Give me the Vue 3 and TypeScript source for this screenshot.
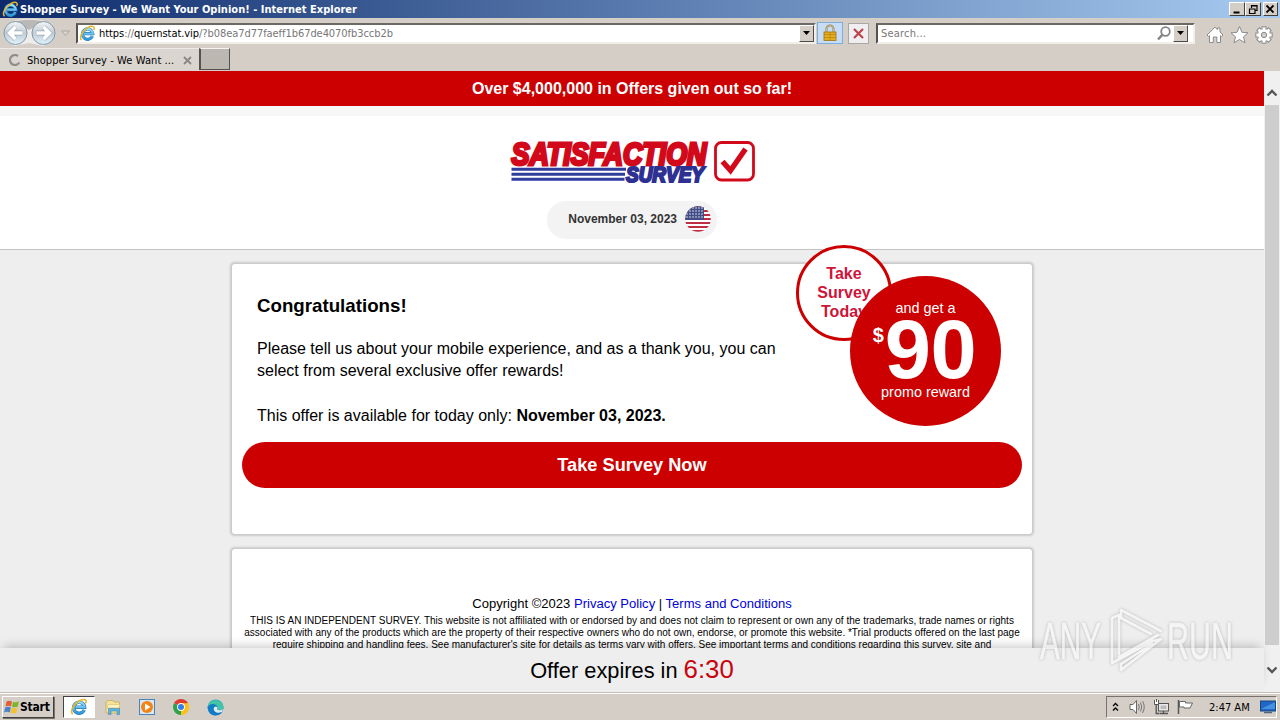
<script setup lang="ts">
const date = 'November 03, 2023'
const finePrint = [
  'THIS IS AN INDEPENDENT SURVEY. This website is not affiliated with or endorsed by and does not claim to represent or own any of the trademarks, trade names or rights',
  'associated with any of the products which are the property of their respective owners who do not own, endorse, or promote this website. *Trial products offered on the last page',
  "require shipping and handling fees. See manufacturer's site for details as terms vary with offers. See important terms and conditions regarding this survey, site and",
]
const stripes = [0, 1, 2, 3, 4, 5, 6]
const starRows = [2, 5, 8, 11]
const starCols = [2, 5, 8, 11, 14, 17]
const gearTeeth = [0, 45, 90, 135, 180, 225, 270, 315]
</script>

<template>
  <div class="desktop">
    <svg class="defs" width="0" height="0" aria-hidden="true">
      <defs>
        <linearGradient id="ieBlue" x1="0" y1="0" x2="0" y2="1">
          <stop offset="0" stop-color="#9be0fa" />
          <stop offset="1" stop-color="#2f97da" />
        </linearGradient>
        <linearGradient id="navFill" x1="0" y1="0" x2="0" y2="1">
          <stop offset="0" stop-color="#f4f6f8" />
          <stop offset=".5" stop-color="#c3ccd5" />
          <stop offset="1" stop-color="#dff3fb" />
        </linearGradient>
        <linearGradient id="edgeFill" x1="0" y1="0" x2="1" y2="1">
          <stop offset="0" stop-color="#35c1d0" />
          <stop offset="1" stop-color="#0b5cb8" />
        </linearGradient>
        <symbol id="ie" viewBox="0 0 18 18">
          <path d="M14.200 11.800A5.500 5.500 0 1 1 14.600 9.200H5.500" fill="none" stroke="#2680bd" stroke-width="3.400" />
          <path d="M14.200 11.800A5.500 5.500 0 1 1 14.600 9.200H5.500" fill="none" stroke="url(#ieBlue)" stroke-width="2.200" />
          <path d="M2.700 16C-.5 13.500 4 5.500 9.500 2.700C14.500 .3 17.500 1.500 15.500 5.300" fill="none" stroke="#e5b52c" stroke-width="1.600" />
        </symbol>
      </defs>
    </svg>

    <header class="titlebar">
      <svg class="title-icon" width="17" height="17"><use href="#ie" /></svg>
      <span class="title-text">Shopper Survey - We Want Your Opinion! - Internet Explorer</span>
      <div class="window-buttons">
        <button class="wb"><svg width="13" height="11"><path d="M2.500 8.500h6" stroke="#000" stroke-width="2" /></svg></button>
        <button class="wb"><svg width="13" height="11"><path d="M4.500 4V1.500h5.500v5H8M4 2h6.500M2 5h6.500M2.500 4.500V9.500h5.500V4.500" fill="none" stroke="#000" stroke-width="1.200" /></svg></button>
        <button class="wb close"><svg width="13" height="11"><path d="M2.500 1.500l7 7M9.500 1.500l-7 7" stroke="#000" stroke-width="1.800" /></svg></button>
      </div>
    </header>

    <div class="toolbar">
      <svg class="nav" width="74" height="30" viewBox="0 0 74 30">
        <path d="M15 2.500C24 0 34 0 43 2.500A13 13 0 0 1 43 28L29 25L15 28A13 13 0 0 1 15 2.500Z" fill="#f3f2f1" opacity=".85" />
        <path d="M14 3.500C24 1 34 1 44 3.500L29 12Z" fill="#bbb9b6" />
        <g fill="url(#navFill)" stroke="#8299aa">
          <circle cx="15.500" cy="15" r="11.500" />
          <circle cx="43.500" cy="15" r="11.500" />
        </g>
        <g fill="none" stroke="#94a8b7" stroke-width="4.800">
          <path d="M22.500 15H10M15.500 9L9.500 15L15.500 21" />
          <path d="M36.500 15H49M43.500 9L49.500 15L43.500 21" />
        </g>
        <g fill="none" stroke="#fff" stroke-width="3.600">
          <path d="M22.500 15H10M15.500 9L9.500 15L15.500 21" />
          <path d="M36.500 15H49M43.500 9L49.500 15L43.500 21" />
        </g>
        <path d="M61.500 13h8l-4 4.500z" fill="#d9d5cf" stroke="#aaa6a0" />
      </svg>
      <div class="field address">
        <svg width="17" height="17"><use href="#ie" /></svg>
        <span class="url"><span class="host">https<i>://</i>quernstat.vip</span><span class="path">/?b08ea7d77faeff1b67de4070fb3ccb2b</span></span>
        <button class="drop"><svg width="9" height="5"><path d="M1 0h7L4.500 4z" /></svg></button>
      </div>
      <div class="lock">
        <svg width="16" height="18" viewBox="0 0 16 18">
          <path d="M4.500 9V5a3.500 3.500 0 0 1 7 0V9" fill="none" stroke="#9b8250" stroke-width="2" />
          <path d="M4.500 9V5a3.500 3.500 0 0 1 7 0V9" fill="none" stroke="#dfd0a0" stroke-width=".7" />
          <rect x="2" y="8" width="12" height="8.500" fill="#e5ac1d" stroke="#9d7015" stroke-width=".8" />
          <path d="M2 10.500h12M2 13.500h12M8 8v8" stroke="#b88112" stroke-width=".7" />
        </svg>
      </div>
      <div class="stop"><svg width="13" height="13"><path d="M2 2l9 9M11 2l-9 9" stroke="#b9454a" stroke-width="2.200" /></svg></div>
      <div class="field search">
        <span class="placeholder">Search...</span>
        <svg class="glass" width="15" height="15"><circle cx="8.500" cy="5.500" r="4.300" fill="none" stroke="#858585" stroke-width="1.800" /><path d="M5.500 8.700L1 13.500" stroke="#858585" stroke-width="2.500" /></svg>
        <button class="drop"><svg width="9" height="5"><path d="M1 0h7L4.500 4z" /></svg></button>
      </div>
      <svg class="tools" width="68" height="20" viewBox="0 0 68 20">
        <g fill="#fff" stroke="#8b8b8b" stroke-width="1">
          <path d="M1 10L9 2.200L11.500 4.600V3H14V7L17 10L15.500 11.500L14.500 10.700V17.500H10.800V12H7.300V17.500H3.500V10.700L2.500 11.500Z" />
          <path d="M33.500 1.500L36 7.300L42 7.800L37.500 11.800L39 17.800L33.500 14.500L28 17.800L29.500 11.800L25 7.800L31 7.300Z" />
          <rect v-for="t in gearTeeth" :key="t" x="56" y="1.800" width="4" height="4" :transform="`rotate(${t} 58 10)`" />
          <circle cx="58" cy="10" r="6" stroke="none" />
          <circle cx="58" cy="10" r="2.700" fill="#d5cec7" />
        </g>
      </svg>
    </div>

    <nav class="tabs">
      <div class="tab">
        <svg width="12" height="12"><path d="M10.300 8.500A5 5 0 1 1 9 2" fill="none" stroke="#8d8d8d" stroke-width="2.200" /></svg>
        <span class="tab-text">Shopper Survey - We Want ...</span>
        <svg class="tab-close" width="9" height="9"><path d="M1 1l7 7M8 1l-7 7" stroke="#8b8784" stroke-width="1.800" /></svg>
      </div>
      <div class="new-tab"></div>
    </nav>

    <div class="viewport">
      <main class="page">
        <div class="banner">Over $4,000,000 in Offers given out so far!</div>
        <section class="masthead">
          <svg class="logo" width="248" height="46" viewBox="0 0 248 46">
            <g font-family="'Liberation Sans', Arial, sans-serif" font-weight="bold" font-style="italic" stroke-linejoin="miter">
              <text x="2.500" y="26.500" font-size="31" textLength="195" lengthAdjust="spacingAndGlyphs" fill="#d2091b" stroke="#d2091b" stroke-width="3.100">SATISFACTION</text>
              <text x="117" y="43.500" font-size="21.500" textLength="78" lengthAdjust="spacingAndGlyphs" fill="#2e3192" stroke="#2e3192" stroke-width="2.200">SURVEY</text>
            </g>
            <path d="M2.500 31.200H117M2.500 36.200H116M2.500 41.200H115.500" stroke="#2f3d9c" stroke-width="2.900" />
            <rect x="206.500" y="4.500" width="38" height="37.500" rx="6" fill="#fff" stroke="#d2091b" stroke-width="2.800" />
            <path d="M213.500 23.500L221.500 32.500L236.500 11" fill="none" stroke="#d2091b" stroke-width="5.400" />
          </svg>
          <div class="date-pill">
            <span>{{ date }}</span>
            <svg width="26" height="26" viewBox="0 0 26 26">
              <defs><clipPath id="disc"><circle cx="13" cy="13" r="12.800" /></clipPath></defs>
              <g clip-path="url(#disc)">
                <rect width="26" height="26" fill="#fff" />
                <rect v-for="s in stripes" :key="s" x="0" :y="s * 4" width="26" height="2" fill="#bd3044" />
                <rect width="19" height="14" fill="#424d86" />
                <template v-for="r in starRows" :key="r">
                  <circle v-for="c in starCols" :key="c" :cx="c" :cy="r" r=".8" fill="#dfe3f1" />
                </template>
              </g>
            </svg>
          </div>
        </section>

        <section class="card offer">
          <h3>Congratulations!</h3>
          <p>Please tell us about your mobile experience, and as a thank you, you can<br />select from several exclusive offer rewards!</p>
          <p>This offer is available for today only: <b>{{ date }}.</b></p>
          <button class="cta">Take Survey Now</button>
          <div class="badge-today">Take<br />Survey<br />Today</div>
          <div class="badge-reward">
            <span class="small">and get a</span>
            <div class="amount"><sup>$</sup><strong>90</strong></div>
            <span class="small">promo reward</span>
          </div>
        </section>

        <section class="card legal">
          <div class="copyright">Copyright ©2023 <a>Privacy Policy</a> | <a>Terms and Conditions</a></div>
          <div class="fine"><div v-for="line in finePrint" :key="line">{{ line }}</div></div>
        </section>
      </main>

      <aside class="scrollbar">
        <svg class="up" width="12" height="9"><path d="M1.500 7.500L6 3L10.500 7.500" fill="none" stroke="#555" stroke-width="2.300" /></svg>
        <div class="thumb"></div>
        <svg class="down" width="12" height="9"><path d="M1.500 1.500L6 6L10.500 1.500" fill="none" stroke="#555" stroke-width="2.300" /></svg>
      </aside>

      <div class="expiry"><span>Offer expires in <em>6:30</em></span></div>

      <svg class="watermark" width="204" height="72" viewBox="0 0 204 72">
        <g font-family="'Liberation Sans', Arial, sans-serif" font-size="52" fill="#fafafa" stroke="#fafafa" stroke-width=".6">
          <text x="5" y="54" textLength="61" lengthAdjust="spacingAndGlyphs">ANY</text>
          <text x="132" y="54" textLength="66" lengthAdjust="spacingAndGlyphs">RUN</text>
        </g>
        <path d="M77 57V13L84 10V49M84 52L123 30M86 5V13L116 29M86 5L126 26M77 58L118 36L126 34L86 65V59L117 39" fill="none" stroke="#fafafa" stroke-width="2.600" stroke-linejoin="round" stroke-linecap="round" />
      </svg>
    </div>

    <footer class="taskbar">
      <button class="start">
        <svg width="16" height="16" viewBox="0 0 16 16">
          <path d="M2.500 2.500Q5 1 8 2.500L7 7.500Q4 6 1.500 7.500Z" fill="#df6034" />
          <path d="M9 2.700Q12 4 15 2.300L13.800 7.500Q11 9 8 7.700Z" fill="#7bb62d" />
          <path d="M1.200 8.500Q4 7 6.800 8.500L5.800 13.500Q3 12 0 13.500Z" fill="#4b82c8" />
          <path d="M7.800 8.700Q10.500 10 13.500 8.500L12.300 13.700Q9.500 15.300 6.700 13.800Z" fill="#f4c32c" />
        </svg>
        <b>Start</b>
      </button>
      <div class="launchers">
        <div class="slot active"><svg width="18" height="18"><use href="#ie" /></svg></div>
        <div class="slot">
          <svg width="17" height="17" viewBox="0 0 17 17">
            <path d="M1 14V3L3 1.500H8L9 3H14.500V14Z" fill="#f6e39b" stroke="#c9ab55" stroke-width=".8" />
            <path d="M3 5.500H15L14 9H2Z" fill="#fbf3c8" stroke="#d9bd65" stroke-width=".6" />
            <path d="M3.500 15.500V9.500H14.500V15.500H12V12H6V15.500Z" fill="#5fb5df" stroke="#3a88b5" stroke-width=".6" />
          </svg>
        </div>
        <div class="slot">
          <svg width="16" height="16" viewBox="0 0 16 16">
            <rect x=".5" y=".5" width="15" height="15" fill="#d7e7f3" stroke="#4b85b8" />
            <circle cx="8" cy="8" r="6" fill="#f18414" /><path d="M6 4.500L11.500 8L6 11.500Z" fill="#fff" />
          </svg>
        </div>
        <div class="slot">
          <svg width="16" height="16" viewBox="0 0 16 16">
            <path d="M8 8L1.100 4A8 8 0 0 1 14.900 4Z" fill="#e03c2e" />
            <path d="M8 8L14.900 4A8 8 0 0 1 8 16Z" fill="#fbc116" />
            <path d="M8 8V16A8 8 0 0 1 1.100 4Z" fill="#2da14b" />
            <path d="M8 4.200H15A8 8 0 0 1 8 16L11.300 10Z" fill="#fbc116" />
            <circle cx="8" cy="8" r="3.900" fill="#fff" /><circle cx="8" cy="8" r="3" fill="#387de5" />
          </svg>
        </div>
        <div class="slot">
          <svg width="17" height="17" viewBox="0 0 17 17">
            <circle cx="8.500" cy="8.500" r="8" fill="url(#edgeFill)" />
            <path d="M1 6.500C3-.5 15-1 16.500 7.500C17 11 12 12 10 10.500C12 8 9 5 6 5.500C4 5.500 2 6 .5 8Z" fill="#43c5a5" />
            <path d="M10 10.500C12 12 15 11 16.500 10L15 13C11 15 6 13 6.500 9C7 7 9 7 10.500 8Z" fill="#d9ecf4" />
            <path d="M.6 8C3 4 9 4 10.500 8C7 6 5 10 8 13C10 15 13 14.500 15 13C11 18 2 18 .6 8Z" fill="#147bc6" />
          </svg>
        </div>
      </div>
      <div class="tray">
        <svg class="chev" width="7" height="10"><path d="M1 4L3.500 1.500L6 4M1 8.500L3.500 6L6 8.500" fill="none" stroke="#000" stroke-width="1.300" /></svg>
        <svg class="vol" width="17" height="16" viewBox="0 0 17 16"><path d="M1 5.500H4L7.500 1.500V14.500L4 10.500H1Z" fill="#fff" stroke="#666" /><path d="M9.500 5Q11 8 9.500 11M11.500 3.500Q14 8 11.500 12.500M13.500 2Q17 8 13.500 14" fill="none" stroke="#777" /></svg>
        <svg class="net" width="17" height="16" viewBox="0 0 17 16"><rect x="5.500" y="4.500" width="10" height="7.500" fill="#e8e8e8" stroke="#555" /><rect x="7.500" y="6.500" width="6" height="3.500" fill="#bbb" /><path d="M10.500 12V14.500M6.500 14.500H15M3.200 5V14.500H6" fill="none" stroke="#555" stroke-width="1.300" /><path d="M1.500 1V5.500H5.500V1M3.500 0V3" fill="#fff" stroke="#555" /></svg>
        <svg class="flag" width="17" height="16" viewBox="0 0 17 16"><path d="M1.500 1V15" stroke="#555" stroke-width="1.500" /><path d="M2.500 2.500H8.500V4H15.500L13 9H7V8H2.500Z" fill="#fff" stroke="#666" /></svg>
        <span class="clock">2:47 AM</span>
        <svg class="screen" width="16" height="14" viewBox="0 0 16 14"><rect x=".5" y="1" width="15" height="10" fill="#1f66c5" stroke="#16467f" /><path d="M1 9L15 2V9Z" fill="#4491e0" /><path d="M4 12.500H12" stroke="#50667e" stroke-width="1.500" /></svg>
      </div>
    </footer>
  </div>
</template>

<style>
body { margin: 0; overflow: hidden; }
</style>

<style scoped>
* { box-sizing: border-box; }
.desktop { width: 1280px; height: 720px; display: flex; flex-direction: column; overflow: hidden; background: #d5cec7; font-family: "DejaVu Sans Condensed", "DejaVu Sans", sans-serif; font-size: 11px; color: #000; }
.defs { position: absolute; }
svg { display: block; flex: none; }
button { padding: 0; border: 0; font: inherit; color: inherit; }

.titlebar { height: 18px; flex: none; display: flex; align-items: center; padding: 0 2px; background: linear-gradient(90deg, #0d2b6c, #a6caf0); }
.title-text { margin-left: 1px; width: 345px; white-space: nowrap; color: #fff; font-weight: bold; letter-spacing: .02px; }
.window-buttons { margin-left: auto; display: flex; }
.wb { width: 16px; height: 14px; background: #d5cec7; border: 1px solid; border-color: #fff #404040 #404040 #fff; display: flex; justify-content: center; align-items: center; }
.close { margin-left: 2px; width: 15px; }

.toolbar { height: 30px; flex: none; display: flex; align-items: center; }
.nav { margin-right: 2px; }
.field { height: 21px; display: flex; align-items: center; background: #fff; border: 2px solid; border-color: #6c6864 #f2efeb #f2efeb #55514e; }
.address { width: 740px; padding-left: 1px; }
.url { margin-left: 3px; white-space: nowrap; letter-spacing: -.06px; }
.url i { font-style: normal; color: #777; }
.path { color: #777; }
.drop { width: 15px; height: 17px; margin-left: auto; background: #d5cec7; border: 1px solid; border-color: #fff #504c49 #504c49 #fff; display: flex; align-items: center; justify-content: center; }
.lock { margin-left: 1px; width: 26px; height: 22px; border: 1px solid #7eaede; background: #c5ddf7; display: flex; align-items: center; justify-content: center; }
.stop { margin-left: 5px; width: 21px; height: 21px; border: 1px solid #aaa7a5; background: #f0eef0; display: flex; align-items: center; justify-content: center; }
.search { margin-left: 7px; width: 319px; padding-left: 3px; padding-right: 5px; }
.placeholder { color: #777; letter-spacing: .2px; }
.glass { margin-left: auto; }
.search .drop { margin-left: 1px; }
.tools { margin-left: 11px; margin-top: 4px; }

.tabs { height: 23px; flex: none; display: flex; }
.tab { width: 199px; display: flex; align-items: center; padding-left: 9px; background: #dbd5cf; border-top: 1px solid #eeeae5; }
.tab-text { margin-left: 6px; width: 156px; white-space: nowrap; letter-spacing: .08px; }
.new-tab { width: 31px; height: 22px; background: #bdb7b2; border: 1px solid; border-left-width: 2px; border-color: #f5f2ef #55514e #55514e #55514e; }

.viewport { position: relative; height: 621px; flex: none; display: flex; overflow: hidden; background: #eee; font-family: "Liberation Sans", Arial, sans-serif; }
.page { width: 1264px; font-size: 16px; }
.banner { height: 35px; background: #c00; color: #fff; font-weight: bold; text-align: center; line-height: 36px; }
.masthead { height: 144px; border-top: 10px solid #f7f7f7; background: #fff; display: flex; flex-direction: column; align-items: center; padding-top: 22px; box-shadow: inset 0 -1px #c3c3c3; }
.logo { margin-left: 2px; overflow: visible; }
.date-pill { margin-top: 17px; width: 170px; height: 38px; border-radius: 19px; background: #f3f3f3; display: flex; align-items: center; justify-content: flex-end; gap: 8px; padding-right: 6px; padding-bottom: 2px; font-size: 12px; font-weight: bold; color: #333; }
.card { position: relative; width: 800px; margin: 0 auto; background: #fff; border-radius: 3px; box-shadow: 0 0 2px 1.500px #cacaca; }
.offer { margin-top: 14px; height: 270px; padding: 0 10px; }
.offer h3 { margin: 0 15px; padding-top: 31px; height: 74px; font-size: 18.720px; line-height: 22px; }
.offer p { margin: 0 15px 22px; font-size: 16px; line-height: 22.400px; }
.cta { display: block; width: 780px; height: 46px; margin-top: -7px; border-radius: 23px; background: #c00; color: #fff; font-size: 18.200px; font-weight: bold; }
.badge-today { position: absolute; left: 564px; top: -19px; width: 96px; height: 96px; border: 3px solid #c00; border-radius: 50%; background: #fff; padding-top: 16px; text-align: center; font-weight: bold; line-height: 19px; color: #cf143a; }
.badge-reward { position: absolute; left: 618px; top: 12px; width: 151px; height: 150px; border-radius: 50%; background: #c00; color: #fff; display: flex; flex-direction: column; align-items: center; padding-top: 24px; }
.small { font-size: 14.400px; line-height: 17px; }
.amount { display: flex; margin-left: -2px; height: 67px; }
.amount sup { font-size: 20px; line-height: 20px; font-weight: bold; padding-top: 8px; }
.amount strong { font-size: 83px; line-height: 65px; margin-left: 1px; letter-spacing: -.400px; }
.legal { margin-top: 15px; height: 160px; padding-top: 46px; text-align: center; }
.copyright { font-size: 13.050px; line-height: 17px; }
.copyright a { color: #0000e0; }
.fine { margin-top: 3px; font-size: 10px; line-height: 12px; white-space: nowrap; display: flex; flex-direction: column; align-items: center; }
.fine div:first-child { letter-spacing: .02px; }

.scrollbar { width: 16px; background: #f0f0f0; display: flex; flex-direction: column; align-items: center; }
.up { margin-top: 17px; }
.thumb { width: 14px; height: 540px; margin-top: 8px; background: #cdcdcd; }
.down { margin-top: 21px; }
.expiry { position: absolute; left: 0; bottom: 0; width: 1264px; height: 44px; padding-bottom: 1px; background: #eee; box-shadow: 0 -5px 10px -4px rgba(0, 0, 0, .25); display: flex; justify-content: center; align-items: center; font-size: 21.800px; }
.expiry em { font-style: normal; font-size: 25.800px; color: #c9040f; }
.watermark { position: absolute; left: 1035px; top: 534px; filter: drop-shadow(0 0 1.500px #999); opacity: .65; }

.taskbar { height: 28px; flex: none; display: flex; align-items: center; padding: 1px 3px 0 2px; border-top: 1px solid #c5beb7; box-shadow: inset 0 1px #fff; }
.start { width: 52px; height: 22px; background: #d5cec7; border: 1px solid; border-color: #fff #404040 #404040 #fff; box-shadow: 1px 1px #77726e; display: flex; align-items: center; padding-left: 1px; font-size: 12px; }
.start b { letter-spacing: -.200px; }
.launchers { display: flex; margin-left: 9px; }
.slot { width: 34px; height: 22px; display: flex; align-items: center; justify-content: center; }
.active { width: 32px; margin-right: 1px; background: #fff; border: 1px solid; border-color: #444 #fff #fff #444; }
.tray { margin-left: auto; width: 171px; height: 22px; display: flex; align-items: center; padding-left: 5px; border: 1px solid; border-color: #77726e #fff #fff #77726e; }
.vol { margin-left: 10px; }
.net { margin-left: 7px; }
.flag { margin-left: 7px; }
.clock { margin-left: 15px; width: 41px; white-space: nowrap; }
.screen { margin-left: 10px; }
</style>
